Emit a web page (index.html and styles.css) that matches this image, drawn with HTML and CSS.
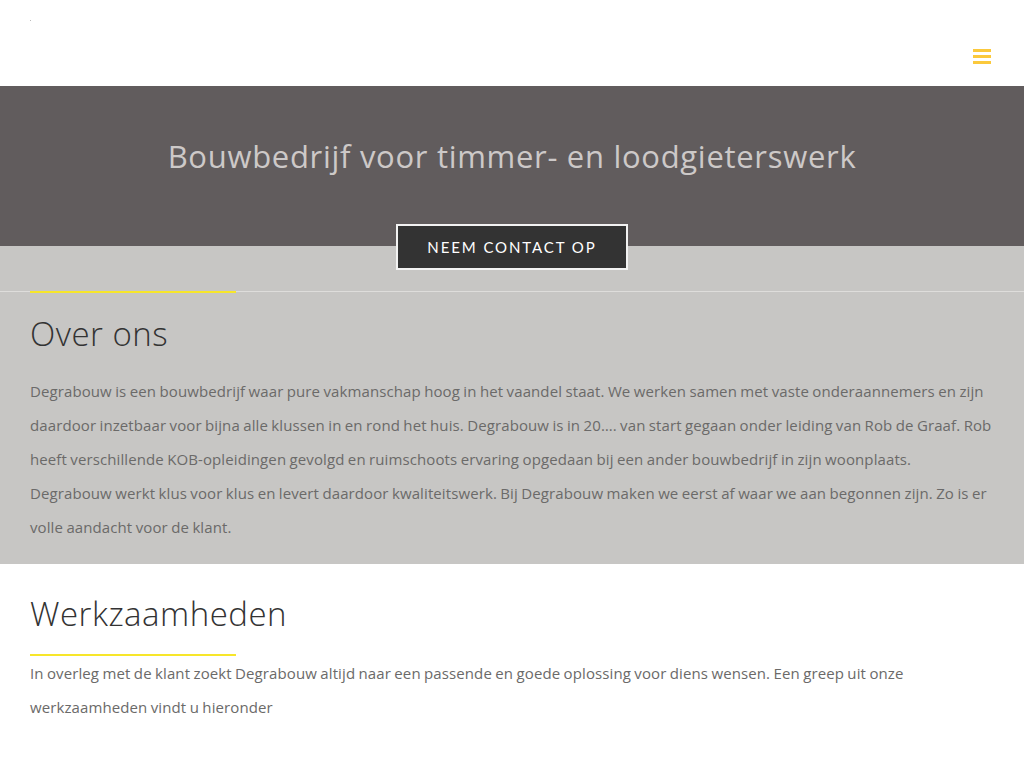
FILE: index.html
```html
<!DOCTYPE html>
<html lang="nl">
<head>
<meta charset="utf-8">
<title>Degrabouw</title>
<link rel="stylesheet" href="styles.css">
</head>
<body>
<header class="site-header">
  <span class="logo-dot"></span>
  <button class="menu-toggle" aria-label="Menu">
    <span></span><span></span><span></span>
  </button>
</header>
<section class="hero">
  <h1 class="hero-title">Bouwbedrijf voor timmer- en loodgieterswerk</h1>
  <a class="cta" href="#">NEEM CONTACT OP</a>
</section>
<section class="about">
  <div class="divider"><span class="accent"></span></div>
  <h2 class="section-title">Over ons</h2>
  <p class="text">Degrabouw is een bouwbedrijf waar pure vakmanschap hoog in het vaandel staat. We werken samen met vaste onderaannemers en zijn daardoor inzetbaar voor bijna alle klussen in en rond het huis. Degrabouw is in 20…. van start gegaan onder leiding van Rob de Graaf. Rob heeft verschillende KOB-opleidingen gevolgd en ruimschoots ervaring opgedaan bij een ander bouwbedrijf in zijn woonplaats. Degrabouw werkt klus voor klus en levert daardoor kwaliteitswerk. Bij Degrabouw maken we eerst af waar we aan begonnen zijn. Zo is er volle aandacht voor de klant.</p>
</section>
<section class="work">
  <h2 class="section-title">Werkzaamheden</h2>
  <span class="accent"></span>
  <p class="text">In overleg met de klant zoekt Degrabouw altijd naar een passende en goede oplossing voor diens wensen. Een greep uit onze werkzaamheden vindt u hieronder</p>
</section>
</body>
</html>
```
FILE: styles.css
```css
* { box-sizing: border-box; }
html, body { margin: 0; padding: 0; }
body {
  font-family: "Open Sans", "Lato", sans-serif;
  background: #fff;
  color: #333;
}
.site-header {
  height: 86px;
  background: #fff;
  display: flex;
  align-items: flex-start;
  justify-content: space-between;
  padding: 0 33px 0 30px;
}
.logo-dot {
  display: block;
  width: 1px;
  height: 1px;
  background: #bbb;
  margin-top: 20px;
}
.menu-toggle {
  margin-top: 49px;
  width: 18px;
  height: 15px;
  padding: 0;
  border: 0;
  background: transparent;
  display: flex;
  flex-direction: column;
  justify-content: space-between;
}
.menu-toggle span {
  display: block;
  height: 3px;
  width: 18px;
  background: #fbc93c;
}
.hero {
  background: #615c5d;
  height: 160px;
  display: flex;
  flex-direction: column;
  align-items: center;
  padding-top: 50px;
  position: relative;
  z-index: 1;
}
.hero-title {
  margin: 0;
  flex-shrink: 0;
  font-weight: 400;
  font-size: 31px;
  line-height: 40px;
  letter-spacing: 0.7px;
  color: #cdc9c8;
}
.cta {
  flex-shrink: 0;
  margin-top: 48px;
  display: inline-flex;
  align-items: center;
  justify-content: center;
  width: 232px;
  height: 46px;
  background: #333;
  border: 2px solid #f2f2f2;
  color: #fff;
  text-decoration: none;
  font-family: "Lato", sans-serif;
  font-size: 15px;
  letter-spacing: 1.9px;
  font-weight: 400;
}
.about {
  background: #c7c6c4;
  padding: 45px 30px 20px 30px;
}
.divider {
  height: 1px;
  background: #dedddb;
  margin: 0 -30px;
  position: relative;
}
.divider .accent {
  position: absolute;
  left: 30px;
  top: 0;
}
.accent {
  display: block;
  width: 206px;
  height: 2px;
  background: #f7e62a;
}
.section-title {
  margin: 0;
  font-weight: 300;
  font-size: 33px;
  line-height: 40px;
  letter-spacing: 0.5px;
  color: #333;
}
.about .section-title {
  margin-top: 22px;
}
.text {
  margin: 0;
  font-size: 15px;
  line-height: 34px;
  letter-spacing: 0.1px;
  word-spacing: -0.6px;
  color: #6b6a69;
}
.about .text {
  margin-top: 20px;
}
.work {
  padding: 30px 30px 40px 30px;
}
.work .accent {
  margin-top: 20px;
}
```
